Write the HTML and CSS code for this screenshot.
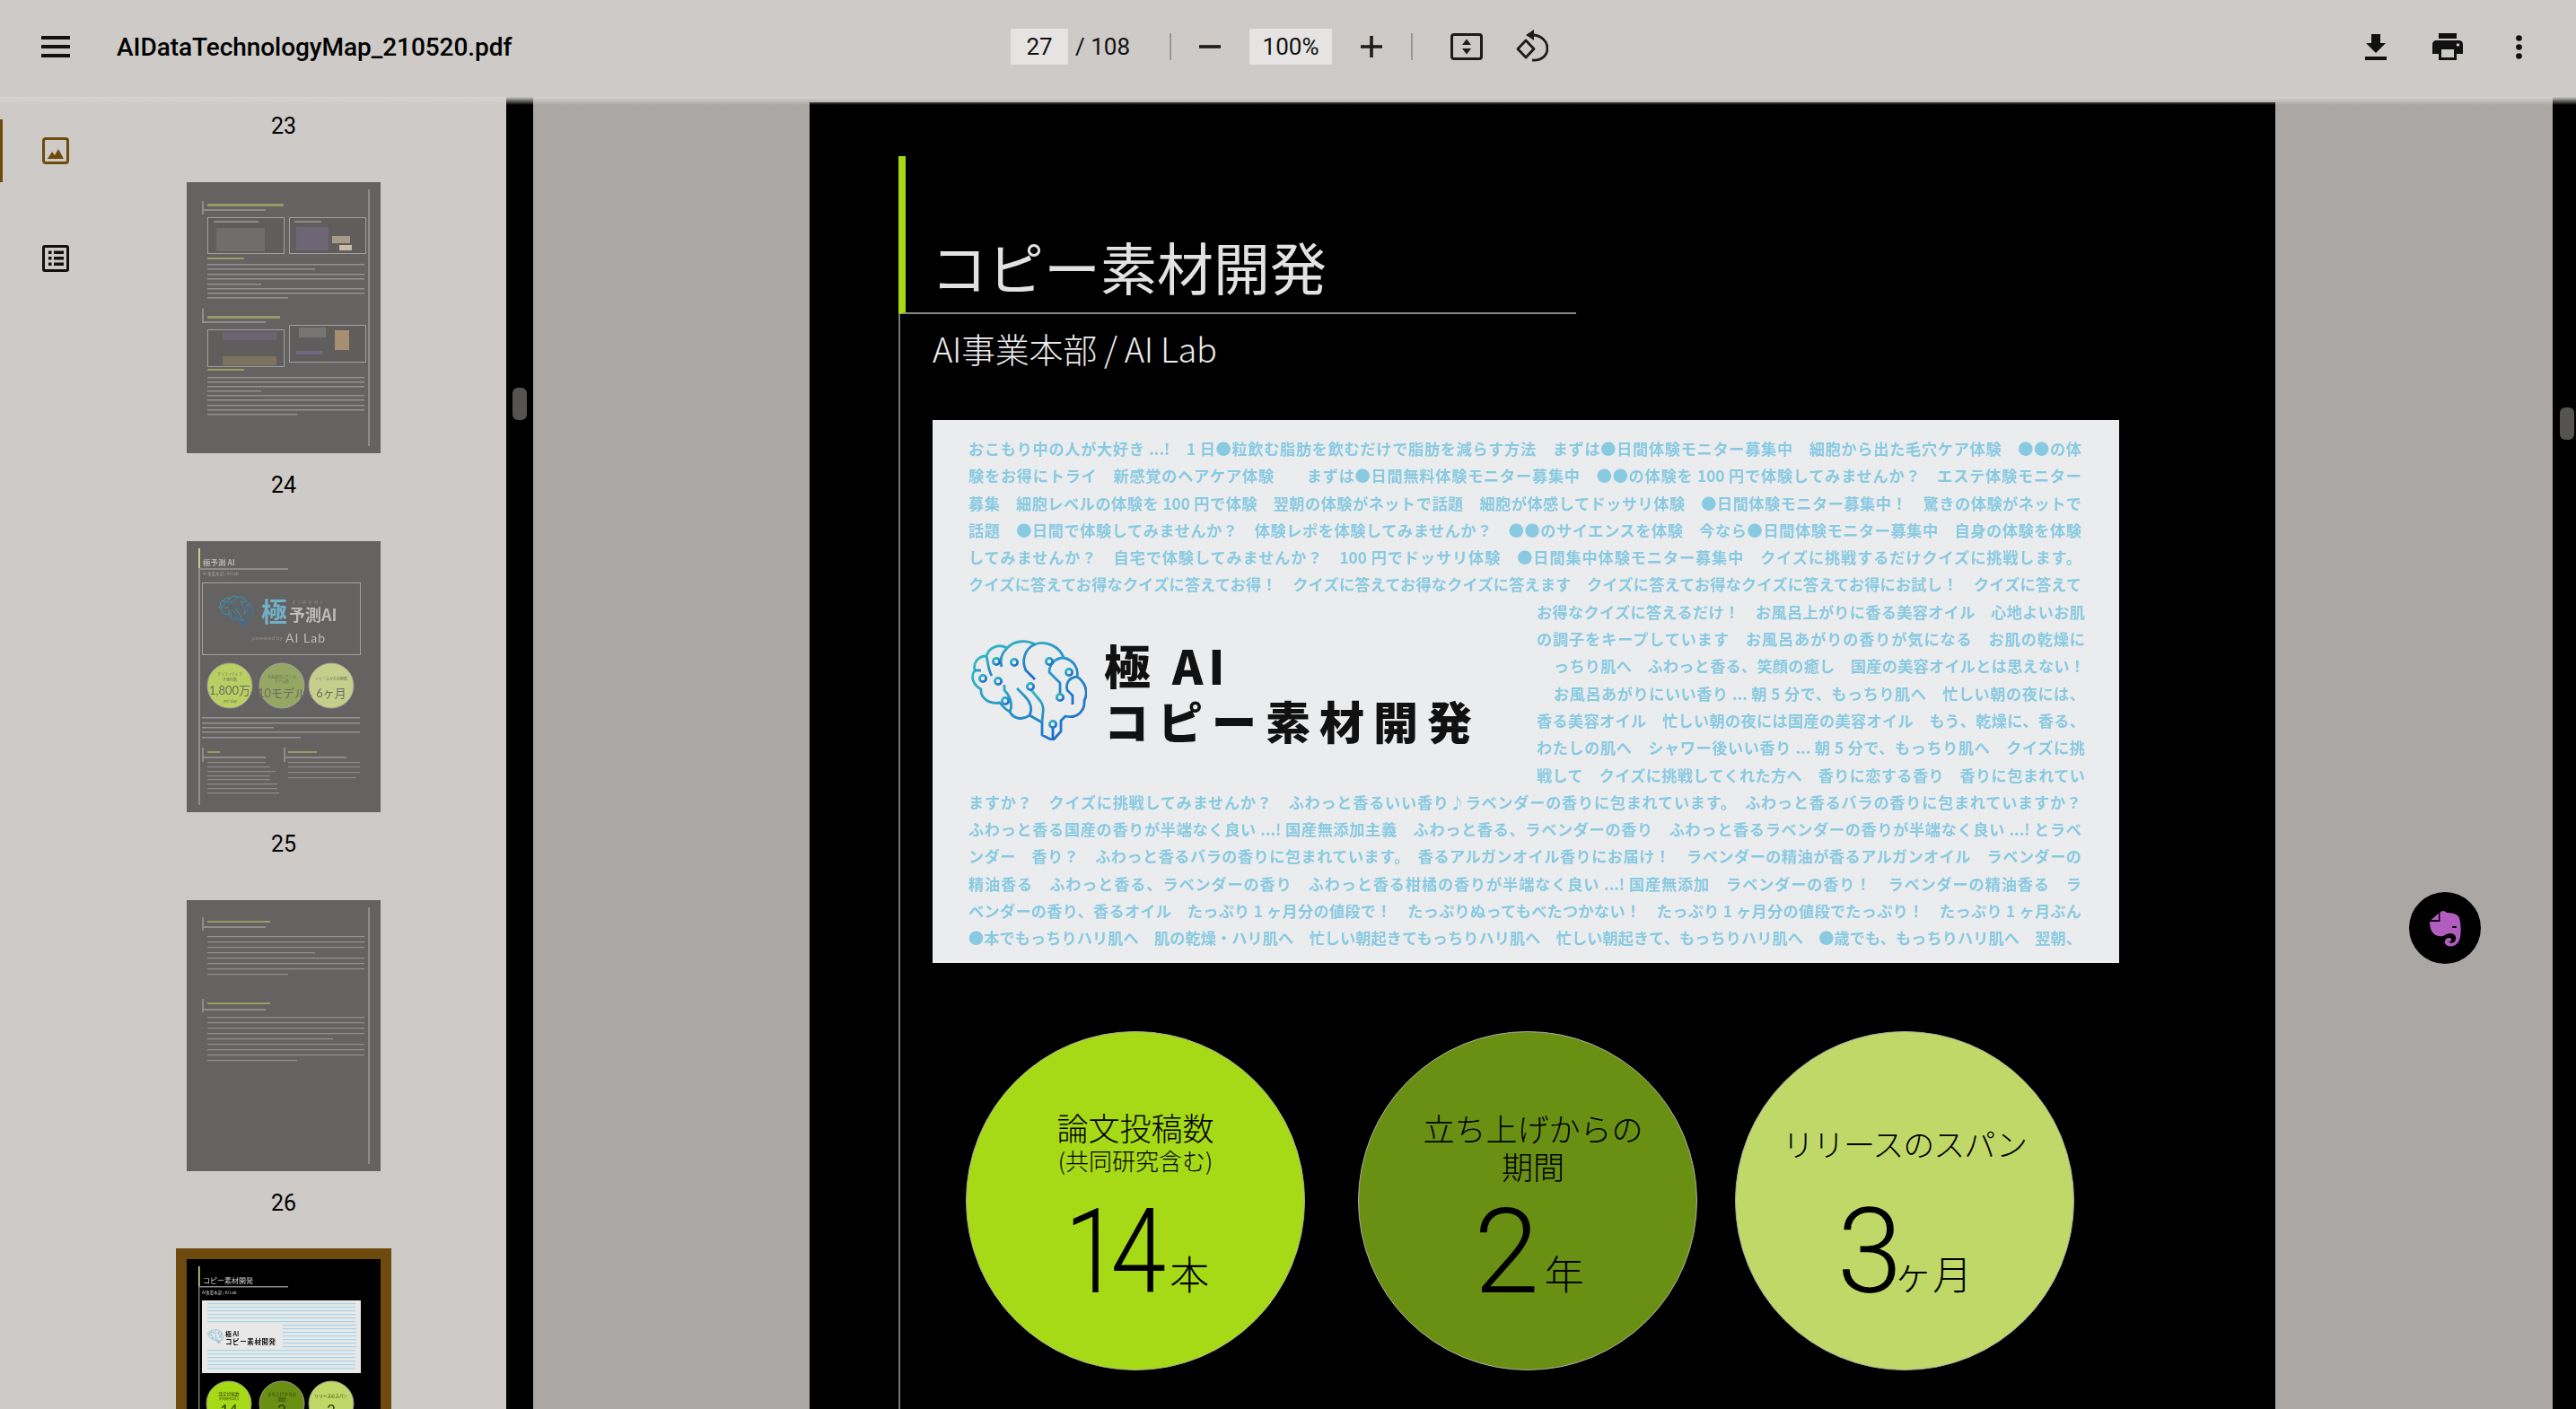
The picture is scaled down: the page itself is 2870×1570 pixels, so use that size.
FILE: index.html
```html
<!DOCTYPE html>
<html lang="ja">
<head>
  <meta charset="UTF-8">
  <title>AIDataTechnologyMap_210520.pdf</title>
  <link rel="stylesheet" href="styles.css">
</head>
<body>

<svg class="defs" width="0" height="0">
  <defs>
    <linearGradient id="brainGrad" x1="0" y1="0" x2="1" y2="1">
      <stop offset="0" stop-color="#33c0c4"/>
      <stop offset="1" stop-color="#1a66cc"/>
    </linearGradient>
    <symbol id="brain" viewBox="0 0 130 112">
      <g fill="none" stroke="url(#brainGrad)" stroke-width="2.800" stroke-linejoin="round">
        <path d="M33 70C20 72 11 64 12 55C3 50 0 41 5 34C3 25 9 18 18 18C21 8 32 4 41 9C50 0 63 0 72 5C85 0 100 8 104 20C115 22 121 32 119 41C128 47 132 58 127 68C128 80 118 88 106 85L101 90V102L92 112L80 106V92L66 84C58 90 48 88 44 80C40 78 36 74 33 70Z"/>
        <path d="M72 5C60 10 57 24 62 34L72 44M41 9C34 16 33 24 35 30M18 18C20 26 20 34 24 40M5 34L12 34"/>
        <path d="M66 84C70 76 66 68 60 62L52 54M44 80C48 72 44 62 38 56V50M104 20C94 20 88 28 88 36L100 48V60M119 41C110 42 106 48 108 56L114 62V72"/>
        <path d="M80 92C80 82 84 76 78 68L68 56M92 112V96"/>
        <circle cx="29" cy="24" r="3.600"/><circle cx="49" cy="25" r="3.600"/>
        <circle cx="14" cy="43" r="3.600"/><circle cx="31" cy="46" r="3.600"/>
        <circle cx="39" cy="68" r="3.600"/><circle cx="67" cy="52" r="3.600"/>
        <circle cx="88" cy="24" r="3.600"/><circle cx="100" cy="64" r="3.600"/>
        <circle cx="110" cy="36" r="3.600"/><circle cx="92" cy="94" r="3.600"/>
      </g>
    </symbol>
  </defs>
</svg>

<header class="toolbar">
  <div class="tb-left">
    <svg class="ico-menu" width="32" height="24" viewBox="0 0 32 24"><path d="M0 2H32M0 12H32M0 22H32" stroke="#111" stroke-width="4"/></svg>
    <span class="doc-title">AIDataTechnologyMap_210520.pdf</span>
  </div>
  <div class="tb-center">
    <span class="num-box page-box">27</span>
    <span class="page-total">/ 108</span>
    <span class="tb-sep sep-a"></span>
    <svg class="ico-minus" width="24" height="24" viewBox="0 0 24 24"><path d="M0 12H24" stroke="#1c1c1c" stroke-width="3.600"/></svg>
    <span class="num-box zoom-box">100%</span>
    <svg class="ico-plus" width="24" height="24" viewBox="0 0 24 24"><path d="M0 12H24M12 0V24" stroke="#1c1c1c" stroke-width="3.600"/></svg>
    <span class="tb-sep sep-b"></span>
    <svg class="ico-fit" width="36" height="30" viewBox="0 0 36 30">
      <rect x="1.500" y="1.500" width="33" height="27" rx="2.500" fill="none" stroke="#1c1c1c" stroke-width="3"/>
      <path d="M18 6.500L23 13H13ZM18 23.500L13 17H23Z" fill="#1c1c1c"/>
    </svg>
    <svg class="ico-rotate" width="36" height="36" viewBox="0 0 36 36">
      <path d="M11 12L20 21.500L11 31L2 21.500Z" fill="none" stroke="#1c1c1c" stroke-width="2.800" stroke-linejoin="round"/>
      <path d="M18 6C28 6 35 13 35 21C35 29 28 35 18 34" fill="none" stroke="#1c1c1c" stroke-width="2.800"/>
      <path d="M20 0V12L11 6Z" fill="#1c1c1c"/>
    </svg>
  </div>
  <div class="tb-right">
    <svg width="24" height="29" viewBox="0 0 24 29"><path d="M7 0H17V10H23L12 21L1 10H7ZM0 25H24V29H0Z" fill="#111"/></svg>
    <svg width="34" height="30" viewBox="0 0 34 30"><path d="M7 0H27V6H7ZM4 8H30C32 8 34 10 34 12V23H27V30H7V23H0V12C0 10 2 8 4 8ZM10 18V27H24V18Z" fill="#111" fill-rule="evenodd"/><circle cx="28.500" cy="13" r="1.800" fill="#cdcac7"/></svg>
    <svg width="7" height="27" viewBox="0 0 7 27"><circle cx="3.500" cy="3.500" r="3.300" fill="#111"/><circle cx="3.500" cy="13.500" r="3.300" fill="#111"/><circle cx="3.500" cy="23.500" r="3.300" fill="#111"/></svg>
  </div>
</header>

<div class="workspace">
  <aside class="sidebar">
    <nav class="rail">
      <button class="rail-btn active">
        <svg width="30" height="30" viewBox="0 0 30 30"><rect x="1.500" y="1.500" width="27" height="27" rx="2.500" fill="none" stroke="#6e4a0e" stroke-width="3"/><path d="M6 24L11 16L14 20L18 13L24 24Z" fill="#6e4a0e"/></svg>
      </button>
      <button class="rail-btn">
        <svg width="30" height="30" viewBox="0 0 30 30"><rect x="1.500" y="1.500" width="27" height="27" rx="1.500" fill="none" stroke="#111" stroke-width="3"/><path d="M7 6.500H10.500V10H7ZM13 6.500H24V10H13ZM7 13H10.500V16.500H7ZM13 13H24V16.500H13ZM7 19.500H10.500V23H7ZM13 19.500H24V23H13Z" fill="#111"/></svg>
      </button>
    </nav>

    <div class="thumbs">
      <div class="thumb-label">23</div>
      <svg class="thumb" viewBox="0 0 216 302">
        <rect x="202" y="8" width="2" height="286" fill="#8f8d8b"/>
        <g fill="#8f8d8b">
          <rect x="17" y="21" width="2" height="15"/><rect x="17" y="30" width="71" height="2"/>
          <rect x="17" y="141" width="2" height="15"/><rect x="17" y="155" width="71" height="2"/>
        </g>
        <g fill="#969c63">
          <rect x="23" y="24" width="85" height="3"/><rect x="23" y="149" width="81" height="3"/>
          <rect x="23" y="84" width="41" height="2"/><rect x="23" y="208" width="41" height="2"/>
        </g>
        <g fill="#605e5c" stroke="#a3a19f" stroke-width="1">
          <rect x="23.500" y="39.500" width="85" height="40"/><rect x="114.500" y="39.500" width="85" height="40"/>
          <rect x="23.500" y="164.500" width="85" height="41"/><rect x="114.500" y="159.500" width="85" height="41"/>
        </g>
        <g fill="#8d8b89">
          <rect x="30" y="43" width="50" height="2"/><rect x="120" y="43" width="30" height="2"/>
          <rect x="33" y="51" width="54" height="26" opacity=".35"/><rect x="122" y="50" width="36" height="26" fill="#6e6575"/>
          <rect x="162" y="60" width="20" height="8" fill="#a89a88"/><rect x="170" y="70" width="14" height="6" fill="#c9bba7"/>
          <rect x="40" y="167" width="60" height="9" fill="#6c6470"/><rect x="40" y="194" width="60" height="10" fill="#7d7160"/>
          <rect x="125" y="162" width="30" height="11" opacity=".5"/><rect x="165" y="165" width="16" height="22" fill="#a58e72"/>
          <rect x="122" y="188" width="30" height="4" fill="#6f6a7f"/>
        </g>
        <g fill="#949290">
          <rect x="23" y="91" width="175" height="1.500"/><rect x="23" y="96" width="120" height="1.500"/>
          <rect x="23" y="102" width="175" height="1.500"/><rect x="23" y="107" width="175" height="1.500"/>
          <rect x="23" y="113" width="60" height="1.500"/><rect x="23" y="118" width="175" height="1.500"/>
          <rect x="23" y="123" width="175" height="1.500"/><rect x="23" y="128" width="90" height="1.500"/>
          <rect x="23" y="217" width="175" height="1.500"/><rect x="23" y="222" width="175" height="1.500"/>
          <rect x="23" y="227" width="175" height="1.500"/><rect x="23" y="232" width="60" height="1.500"/>
          <rect x="23" y="237" width="175" height="1.500"/><rect x="23" y="242" width="175" height="1.500"/>
          <rect x="23" y="248" width="175" height="1.500"/><rect x="23" y="253" width="175" height="1.500"/>
          <rect x="23" y="258" width="100" height="1.500"/>
        </g>
      </svg>

      <div class="thumb-label">24</div>
      <svg class="thumb" viewBox="0 0 216 302">
        <rect x="13" y="8" width="2" height="286" fill="#8f8d8b"/>
        <rect x="13" y="8" width="2" height="23" fill="#c4cf8c"/>
        <rect x="13" y="30" width="100" height="2" fill="#8f8d8b"/>
        <text class="t-ja" x="18" y="27" font-size="8.500" font-weight="700" fill="#b5b3b1">極予測 AI</text>
        <text class="t-ja" x="18" y="38" font-size="4.500" fill="#a3a19f">AI 事業本部 / AI Lab</text>
        <rect x="17.500" y="46.500" width="176" height="80" fill="none" stroke="#a3a19f"/>
        <use href="#brain" x="36" y="61" width="38" height="33"/>
        <text class="t-ja" x="83" y="90" font-size="29" font-weight="700" fill="#72b0c8">極</text>
        <text class="t-ja" x="114" y="89" font-size="18" font-weight="700" fill="#bdbbb9">予測AI</text>
        <text class="t-ja" x="118" y="70" font-size="5" letter-spacing="3" fill="#8f8d8b">KIWAMI</text>
        <text class="t-lat" x="73" y="110" font-size="6.500" fill="#8f8d8b">powered by</text>
        <text class="t-lat" x="110" y="113" font-size="14" letter-spacing="1" fill="#bdbbb9">AI Lab</text>
        <circle cx="48" cy="161" r="25" fill="#b9cf62" stroke="#a3a19f"/>
        <circle cx="106" cy="161" r="25" fill="#95a763" stroke="#a3a19f"/>
        <circle cx="161" cy="161" r="25" fill="#c4cf8c" stroke="#a3a19f"/>
        <g class="t-ja" fill="#6d6c60" text-anchor="middle">
          <text x="48" y="150" font-size="4">クリエイティブ</text>
          <text x="48" y="156" font-size="4">予測件数</text>
          <text x="48" y="171" font-size="13" class="t-lat">1,800万</text>
          <text x="48" y="180" font-size="4">/Per day</text>
          <text x="106" y="153" font-size="4">本番運用している</text>
          <text x="106" y="158" font-size="4">モデル数</text>
          <text x="106" y="174" font-size="13" class="t-lat">10モデル</text>
          <text x="161" y="155" font-size="4">リリースからの期間</text>
          <text x="161" y="174" font-size="13" class="t-lat">6ヶ月</text>
        </g>
        <g fill="#949290">
          <rect x="17" y="196" width="176" height="1.500"/><rect x="17" y="202" width="176" height="1.500"/>
          <rect x="17" y="207" width="80" height="1.500"/><rect x="17" y="212" width="176" height="1.500"/>
          <rect x="17" y="218" width="110" height="1.500"/>
        </g>
        <g fill="#8f8d8b">
          <rect x="17" y="230" width="2" height="16"/><rect x="17" y="240" width="71" height="2"/>
          <rect x="108" y="230" width="2" height="16"/><rect x="108" y="240" width="70" height="2"/>
        </g>
        <g fill="#969c63"><rect x="23" y="234" width="14" height="2"/><rect x="113" y="234" width="32" height="2"/></g>
        <g fill="#8d8b89">
          <rect x="23" y="246" width="65" height="1.200"/><rect x="23" y="251" width="70" height="1.200"/>
          <rect x="23" y="256" width="76" height="1.200"/><rect x="23" y="261" width="70" height="1.200"/>
          <rect x="23" y="265" width="70" height="1.200"/><rect x="23" y="270" width="78" height="1.200"/>
          <rect x="23" y="275" width="78" height="1.200"/><rect x="23" y="280" width="80" height="1.200"/>
          <rect x="113" y="246" width="80" height="1.200"/><rect x="113" y="251" width="80" height="1.200"/>
          <rect x="113" y="257" width="80" height="1.200"/><rect x="113" y="263" width="76" height="1.200"/>
        </g>
      </svg>

      <div class="thumb-label">25</div>
      <svg class="thumb" viewBox="0 0 216 302">
        <rect x="202" y="8" width="2" height="286" fill="#8f8d8b"/>
        <g fill="#8f8d8b">
          <rect x="17" y="19" width="2" height="15"/><rect x="17" y="29" width="71" height="2"/>
          <rect x="17" y="110" width="2" height="15"/><rect x="17" y="121" width="71" height="2"/>
        </g>
        <g fill="#969c63"><rect x="23" y="23" width="70" height="2"/><rect x="23" y="114" width="70" height="2"/></g>
        <g fill="#949290">
          <rect x="23" y="40" width="175" height="1.200"/><rect x="23" y="46" width="175" height="1.200"/>
          <rect x="23" y="52" width="175" height="1.200"/><rect x="23" y="58" width="120" height="1.200"/>
          <rect x="23" y="64" width="175" height="1.200"/><rect x="23" y="70" width="175" height="1.200"/>
          <rect x="23" y="76" width="175" height="1.200"/><rect x="23" y="82" width="90" height="1.200"/>
          <rect x="23" y="130" width="175" height="1.200"/><rect x="23" y="136" width="175" height="1.200"/>
          <rect x="23" y="142" width="175" height="1.200"/><rect x="23" y="148" width="175" height="1.200"/>
          <rect x="23" y="154" width="140" height="1.200"/><rect x="23" y="160" width="175" height="1.200"/>
          <rect x="23" y="166" width="175" height="1.200"/><rect x="23" y="172" width="175" height="1.200"/>
          <rect x="23" y="178" width="100" height="1.200"/>
        </g>
      </svg>

      <div class="thumb-label">26</div>
      <svg class="thumb current" viewBox="0 0 216 302">
        <rect width="216" height="302" fill="#000"/>
        <rect x="13" y="8" width="1.500" height="294" fill="#777"/>
        <rect x="13" y="8" width="1.500" height="22" fill="#c4df6a"/>
        <rect x="13" y="30" width="100" height="1.500" fill="#888"/>
        <text class="t-ja" x="18" y="27" font-size="8" fill="#d6d6d6">コピー素材開発</text>
        <text class="t-ja" x="17" y="39" font-size="4.500" fill="#c8c8c8">AI事業本部 / AI Lab</text>
        <rect x="17" y="46" width="177" height="81" fill="#e8e8e8"/>
        <g fill="#a6d5e8">
          <rect x="23" y="49" width="165" height="1.200"/><rect x="23" y="53" width="165" height="1.200"/>
          <rect x="23" y="57" width="165" height="1.200"/><rect x="23" y="61" width="165" height="1.200"/>
          <rect x="23" y="65" width="165" height="1.200"/><rect x="23" y="69" width="165" height="1.200"/>
          <rect x="107" y="73" width="82" height="1.200"/><rect x="107" y="77" width="82" height="1.200"/>
          <rect x="107" y="81" width="82" height="1.200"/><rect x="107" y="85" width="82" height="1.200"/>
          <rect x="107" y="89" width="82" height="1.200"/><rect x="107" y="93" width="82" height="1.200"/>
          <rect x="107" y="97" width="82" height="1.200"/>
          <rect x="23" y="101" width="165" height="1.200"/><rect x="23" y="105" width="165" height="1.200"/>
          <rect x="23" y="109" width="165" height="1.200"/><rect x="23" y="113" width="165" height="1.200"/>
          <rect x="23" y="117" width="165" height="1.200"/><rect x="23" y="121" width="165" height="1.200"/>
        </g>
        <use href="#brain" x="23" y="78" width="18" height="16"/>
        <text class="t-ja" x="43" y="86" font-size="7" font-weight="700" fill="#111">極 AI</text>
        <text class="t-ja" x="43" y="95" font-size="7.500" font-weight="700" letter-spacing=".6" fill="#111">コピー素材開発</text>
        <circle cx="47" cy="161" r="25" fill="#a6d916" stroke="#999"/>
        <circle cx="106" cy="161" r="25" fill="#699013" stroke="#999"/>
        <circle cx="161" cy="161" r="25" fill="#bfd868" stroke="#999"/>
        <g class="t-ja" fill="#2c3a08" text-anchor="middle">
          <text x="47" y="152" font-size="4.600">論文投稿数</text>
          <text x="47" y="157" font-size="3.400">(共同研究含む)</text>
          <text x="47" y="175" font-size="17" class="t-lat">14</text>
          <text x="106" y="152" font-size="4.600">立ち上げからの</text>
          <text x="106" y="158" font-size="4.600">期間</text>
          <text x="106" y="175" font-size="17" class="t-lat">2</text>
          <text x="161" y="154" font-size="4.600">リリースのスパン</text>
          <text x="161" y="175" font-size="17" class="t-lat">3</text>
        </g>
      </svg>
    </div>
  </aside>

  <div class="side-scroll"><span class="scroll-thumb"></span></div>

  <main class="viewer">
    <article class="page">
      <div class="page-head">
        <h1 class="page-title">コピー素材開発</h1>
      </div>
      <div class="page-body">
        <p class="page-sub">AI事業本部 / AI Lab</p>

        <section class="hero">
          <div class="copy-line">おこもり中の人が大好き ...!　1 日●粒飲む脂肪を飲むだけで脂肪を減らす方法　まずは●日間体験モニター募集中　細胞から出た毛穴ケア体験　●●の体</div>
          <div class="copy-line">験をお得にトライ　新感覚のヘアケア体験　　まずは●日間無料体験モニター募集中　●●の体験を 100 円で体験してみませんか？　エステ体験モニター</div>
          <div class="copy-line">募集　細胞レベルの体験を 100 円で体験　翌朝の体験がネットで話題　細胞が体感してドッサリ体験　●日間体験モニター募集中！　驚きの体験がネットで</div>
          <div class="copy-line">話題　●日間で体験してみませんか？　体験レポを体験してみませんか？　●●のサイエンスを体験　今なら●日間体験モニター募集中　自身の体験を体験</div>
          <div class="copy-line">してみませんか？　自宅で体験してみませんか？　100 円でドッサリ体験　●日間集中体験モニター募集中　クイズに挑戦するだけクイズに挑戦します。</div>
          <div class="copy-line">クイズに答えてお得なクイズに答えてお得！　クイズに答えてお得なクイズに答えます　クイズに答えてお得なクイズに答えてお得にお試し！　クイズに答えて</div>

          <div class="hero-mid">
            <div class="hero-logo">
              <svg class="hero-brain" width="130" height="112"><use href="#brain"/></svg>
              <div class="hero-name">
                <div class="name-a">極 AI</div>
                <div class="name-b">コピー素材開発</div>
              </div>
            </div>
            <div class="hero-side">
              <div class="copy-line">お得なクイズに答えるだけ！　お風呂上がりに香る美容オイル　心地よいお肌</div>
              <div class="copy-line">の調子をキープしています　お風呂あがりの香りが気になる　お肌の乾燥に</div>
              <div class="copy-line inset">っちり肌へ　ふわっと香る、笑顔の癒し　国産の美容オイルとは思えない！</div>
              <div class="copy-line inset">お風呂あがりにいい香り ... 朝 5 分で、もっちり肌へ　忙しい朝の夜には、</div>
              <div class="copy-line">香る美容オイル　忙しい朝の夜には国産の美容オイル　もう、乾燥に、香る、</div>
              <div class="copy-line">わたしの肌へ　シャワー後いい香り ... 朝 5 分で、もっちり肌へ　クイズに挑</div>
              <div class="copy-line">戦して　クイズに挑戦してくれた方へ　香りに恋する香り　香りに包まれてい</div>
            </div>
          </div>

          <div class="copy-line">ますか？　クイズに挑戦してみませんか？　ふわっと香るいい香り♪ラベンダーの香りに包まれています。　ふわっと香るバラの香りに包まれていますか？</div>
          <div class="copy-line">ふわっと香る国産の香りが半端なく良い ...! 国産無添加主義　ふわっと香る、ラベンダーの香り　ふわっと香るラベンダーの香りが半端なく良い ...! とラベ</div>
          <div class="copy-line">ンダー　香り？　ふわっと香るバラの香りに包まれています。　香るアルガンオイル香りにお届け！　ラベンダーの精油が香るアルガンオイル　ラベンダーの</div>
          <div class="copy-line">精油香る　ふわっと香る、ラベンダーの香り　ふわっと香る柑橘の香りが半端なく良い ...! 国産無添加　ラベンダーの香り！　ラベンダーの精油香る　ラ</div>
          <div class="copy-line">ベンダーの香り、香るオイル　たっぷり 1 ヶ月分の値段で！　たっぷりぬってもべたつかない！　たっぷり 1 ヶ月分の値段でたっぷり！　たっぷり 1 ヶ月ぶん</div>
          <div class="copy-line">●本でもっちりハリ肌へ　肌の乾燥・ハリ肌へ　忙しい朝起きてもっちりハリ肌へ　忙しい朝起きて、もっちりハリ肌へ　●歳でも、もっちりハリ肌へ　翌朝、</div>
        </section>

        <section class="stats">
          <div class="stat stat-a">
            <div class="stat-head">
              <div class="stat-label">論文投稿数</div>
              <div class="stat-note">(共同研究含む)</div>
            </div>
            <div class="stat-value"><span class="stat-num num-14">14</span><span class="stat-unit">本</span></div>
          </div>
          <div class="stat stat-b">
            <div class="stat-head">
              <div class="stat-label">立ち上げからの<br>期間</div>
            </div>
            <div class="stat-value"><span class="stat-num">2</span><span class="stat-unit">年</span></div>
          </div>
          <div class="stat stat-c">
            <div class="stat-head">
              <div class="stat-label">リリースのスパン</div>
            </div>
            <div class="stat-value"><span class="stat-num">3</span><span class="stat-unit">ヶ月</span></div>
          </div>
        </section>
      </div>
    </article>

    <button class="clip-btn">
      <svg width="35" height="41" viewBox="0 0 35 41">
        <path d="M11.500 3C14 0 17 1 19 3C26 3 32 5 33 9C35 16 35 24 34 30C33 37 28 41 22 40.500C18 40 16 37 17 34C18 31 22 30 24 32C25 34 23 36 21 35C23 38 28 37 29 33C30 29 27 26 23 26C20 26 18 27 17 28C14 30 8 30 4 26C1 23 0 18 0 13H11.500Z" fill="#b35cc0"/>
        <path d="M1.500 11L10 3.500V11Z" fill="#b35cc0"/>
        <rect x="25" y="18" width="5" height="2" rx="1" fill="#000"/>
      </svg>
    </button>
  </main>

  <div class="main-scroll"><span class="scroll-thumb"></span></div>
</div>

</body>
</html>
```

FILE: styles.css
```css
html, body {
  margin: 0;
  height: 100%;
  overflow: hidden;
}

body {
  font-family: Roboto, "Noto Sans CJK JP", sans-serif;
  background-color: #000;
  color: #000;
}

.defs {
  display: block;
  height: 0;
}

/* top bar */
.toolbar {
  position: relative;
  z-index: 2;
  display: flex;
  align-items: center;
  height: 108px;
  padding: 0 60px 4px 46px;
  box-sizing: border-box;
  background-color: #cdcac7;
}

.toolbar::after {
  content: "";
  position: absolute;
  left: 0;
  right: 0;
  top: 100%;
  height: 9px;
  background: linear-gradient(rgba(214, 213, 210, 0.95), rgba(214, 213, 210, 0));
}

.tb-left {
  display: flex;
  align-items: center;
  width: 1080px;
}

.doc-title {
  margin-left: 52px;
  font-size: 28px;
  font-weight: 500;
  letter-spacing: -0.05px;
}

.tb-center {
  display: flex;
  align-items: center;
  font-size: 26px;
  color: #111;
}

.num-box {
  display: flex;
  align-items: center;
  justify-content: center;
  height: 40px;
  background-color: #e5e4e2;
}

.page-box { width: 64px; }
.zoom-box { width: 92px; margin: 0 32px; }
.page-total { width: 105px; margin-left: 8px; }

.tb-sep {
  width: 2px;
  height: 30px;
  background-color: #9a9896;
}

.ico-minus { margin-left: 31px; }
.ico-fit { margin-left: 42px; }
.ico-rotate { margin-left: 37px; margin-bottom: 2px; }
.sep-b { margin-left: 32px; }

.tb-right {
  display: flex;
  align-items: center;
  margin-left: auto;
}

.tb-right svg:nth-child(2) { margin-left: 51px; }
.tb-right svg:nth-child(3) { margin-left: 59px; }

/* below the bar */
.workspace {
  display: flex;
  height: 1462px;
  overflow: hidden;
}

.sidebar {
  display: flex;
  width: 564px;
  flex-shrink: 0;
  background-color: #cdcac7;
  overflow: hidden;
}

.rail {
  display: flex;
  flex-direction: column;
  gap: 50px;
  width: 68px;
  flex-shrink: 0;
  padding-top: 25px;
  box-sizing: border-box;
}

.rail-btn {
  display: block;
  width: 68px;
  height: 70px;
  padding: 0 0 0 47px;
  border: none;
  background: none;
  text-align: left;
}

.rail-btn svg { display: block; }

.rail-btn.active {
  padding-left: 44px;
  border-left: 3px solid #6e4a0e;
}

.thumbs {
  width: 496px;
  margin-top: -3px;
  text-align: center;
}

.thumb-label {
  height: 72px;
  margin-bottom: 26px;
  font-size: 25px;
  line-height: 72px;
}

.thumb {
  display: block;
  width: 216px;
  height: 302px;
  margin: 0 auto;
  background-color: #656361;
  filter: blur(0.6px);
}

.thumb.current {
  box-shadow: 0 0 0 12px #6e4a0e;
  overflow: visible;
}

.t-ja { font-family: "Noto Sans CJK JP", sans-serif; }
.t-lat { font-family: Lato, "Noto Sans CJK JP", sans-serif; }

.side-scroll {
  width: 30px;
  flex-shrink: 0;
  padding: 324px 0 0 7px;
  box-sizing: border-box;
  background-color: #000;
}

.main-scroll {
  width: 26px;
  flex-shrink: 0;
  padding: 346px 0 0 8px;
  box-sizing: border-box;
  background-color: #000;
}

.scroll-thumb {
  display: block;
  width: 16px;
  height: 36px;
  border-radius: 6px;
  background-color: #55534f;
}

/* pdf page */
.viewer {
  position: relative;
  flex: 1;
  padding: 6px 0 0 308px;
  background-color: #aaa7a4;
  overflow: hidden;
}

.page {
  width: 1633px;
  height: 1500px;
  padding: 60px 0 0 99px;
  box-sizing: border-box;
  background-color: #000;
}

.page-head {
  display: flex;
  align-items: flex-end;
  width: 755px;
  height: 176px;
  padding: 0 0 12px 28px;
  box-sizing: border-box;
  border-left: 8px solid #a6d916;
  border-bottom: 2px solid #888;
}

.page-title {
  margin: 0;
  font-family: "Noto Sans CJK JP", sans-serif;
  font-size: 63px;
  font-weight: 400;
  line-height: 80px;
  color: #e2e2e2;
}

.page-body {
  height: 1300px;
  padding-left: 36px;
  border-left: 2px solid #777;
}

.page-sub {
  margin: 0;
  padding-top: 11px;
  height: 118px;
  box-sizing: border-box;
  font-family: "Noto Sans CJK JP", sans-serif;
  font-size: 38px;
  font-weight: 300;
  line-height: 54px;
  letter-spacing: -0.3px;
  color: #ececec;
}

.hero {
  width: 1322px;
  height: 605px;
  padding: 17px 42px 0 40px;
  box-sizing: border-box;
  background-color: #ebeced;
  font-family: "Noto Sans CJK JP", sans-serif;
  filter: blur(0.4px);
}

.copy-line {
  height: 30.3px;
  font-size: 17.2px;
  font-weight: 700;
  line-height: 30px;
  color: #88cae2;
  white-space: nowrap;
  text-align: justify;
  text-align-last: justify;
}

.hero-mid {
  display: flex;
  height: 212px;
}

.hero-logo {
  display: flex;
  width: 633px;
  flex-shrink: 0;
  padding: 46px 0 0 2px;
  box-sizing: border-box;
}

.hero-brain { flex-shrink: 0; }

.hero-name {
  margin: -3px 0 0 19px;
  color: #111;
  font-weight: 900;
}

.name-a {
  font-size: 52px;
  line-height: 62px;
  letter-spacing: 6px;
}

.name-b {
  font-size: 50px;
  line-height: 60px;
  letter-spacing: 10px;
  white-space: nowrap;
}

.hero-side {
  width: 611px;
  flex-shrink: 0;
}

.hero-side .inset { margin-left: 19px; }

/* circles */
.stats {
  display: flex;
  padding: 76px 0 0 37px;
  font-family: "Noto Sans CJK JP", sans-serif;
}

.stat {
  display: flex;
  flex-direction: column;
  align-items: center;
  width: 378px;
  height: 378px;
  flex-shrink: 0;
  box-sizing: border-box;
  border: 1px solid #aaa;
  border-radius: 50%;
  text-align: center;
}

.stat-a { background-color: #a6d916; }
.stat-b { background-color: #699013; margin-left: 59px; }
.stat-c { background-color: #bfd868; margin-left: 42px; }

.stat-head {
  height: 180px;
  box-sizing: border-box;
  white-space: nowrap;
}

.stat-a .stat-head { padding-top: 85px; }
.stat-b .stat-head { padding: 86px 0 0 12px; }
.stat-c .stat-head { padding-top: 103px; }

.stat-label {
  font-size: 35px;
  font-weight: 300;
  line-height: 42px;
}

.stat-c .stat-label { letter-spacing: -1px; }

.stat-note {
  font-size: 26px;
  font-weight: 300;
  line-height: 32px;
}

.stat-value {
  display: flex;
  align-items: baseline;
  justify-content: center;
  line-height: 130px;
}

.stat-num {
  font-family: Roboto, sans-serif;
  font-size: 131px;
  font-weight: 300;
}

/* the two digits are narrower on the slide than in Roboto */
.num-14 {
  display: inline-block;
  margin-right: -18px;
  letter-spacing: -12px;
  transform: scaleX(0.85);
  transform-origin: left center;
}

.stat-unit {
  margin-left: 6px;
  font-size: 44px;
  font-weight: 300;
  letter-spacing: -3px;
  transform: translateY(-3px);
}

.stat-a .stat-unit { margin-left: 14px; }

.stat-c .stat-unit {
  margin-left: -10px;
  letter-spacing: 0;
}

/* floating clipper button */
.clip-btn {
  position: absolute;
  left: 2090px;
  top: 886px;
  display: flex;
  align-items: center;
  justify-content: center;
  width: 80px;
  height: 80px;
  padding: 0;
  border: none;
  border-radius: 50%;
  background-color: #000;
}
```
